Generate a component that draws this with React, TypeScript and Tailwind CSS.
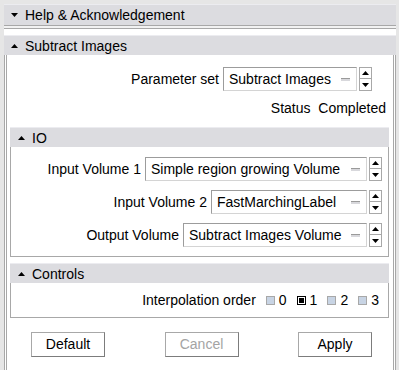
import React from 'react';

const font = { fontFamily: '"Liberation Sans", Arial, sans-serif' };

const Arrow = ({ up }: { up: boolean }) => (
  <svg width="7" height="4" viewBox="0 0 7 4" className="block">
    {up ? <path d="M3.5 0 L7 4 L0 4 Z" fill="#000" /> : <path d="M0 0 L7 0 L3.5 4 Z" fill="#000" />}
  </svg>
);

const Header = ({ title, open, h = 20, icon = 22 }: { title: string; open: boolean; h?: number; icon?: number }) => (
  <div className="flex items-center bg-[#dcdce0] border-t border-[#ececf0] text-[14px] text-black" style={{ height: h }}>
    <div className="flex justify-center" style={{ width: icon }}>
      <Arrow up={open} />
    </div>
    <span className="leading-none">{title}</span>
  </div>
);

const Spinner = () => (
  <div className="flex flex-col ml-[2px]">
    <div className="w-[13px] h-[12px] border border-[#a8a8a8] bg-white flex items-center justify-center">
      <Arrow up />
    </div>
    <div className="w-[13px] h-[12px] border border-t-0 border-[#a8a8a8] bg-white flex items-center justify-center">
      <Arrow up={false} />
    </div>
  </div>
);

const Combo = ({ text, width }: { text: string; width: number }) => (
  <div className="flex items-center">
    <div
      className="h-[24px] bg-white border border-[#9c9c9c] border-r-[#d4d4d4] border-b-[#d4d4d4] flex items-center justify-between pl-[5px] pr-[6px] text-[14px]"
      style={{ width }}
    >
      <span className="whitespace-nowrap">{text}</span>
      <span className="w-[9px] h-[3px] bg-[#d8d8dc] border-t border-[#9a9a9a]" />
    </div>
    <Spinner />
  </div>
);

const Row = ({ label, text, width }: { label: string; text: string; width: number }) => (
  <div className="flex items-center justify-end gap-[4px]">
    <span className="whitespace-nowrap">{label}</span>
    <Combo text={text} width={width} />
  </div>
);

const Radio = ({ label, checked }: { label: string; checked?: boolean }) => (
  <div className="flex items-center gap-[4px]">
    <span
      className={
        checked
          ? 'w-[9px] h-[9px] border border-black bg-white flex items-center justify-center'
          : 'w-[9px] h-[9px] border border-[#a8a8a8] bg-[#c8d4e4]'
      }
    >
      {checked && <span className="w-[5px] h-[5px] bg-black" />}
    </span>
    <span className="leading-none">{label}</span>
  </div>
);

const Button = ({ label, disabled }: { label: string; disabled?: boolean }) => (
  <div
    className={
      'w-[74px] h-[25px] bg-white border border-[#a8a8a8] border-r-[#7c7c7c] border-b-[#7c7c7c] flex items-center justify-center text-[14px] ' +
      (disabled ? 'text-[#a4a4a4]' : 'text-black')
    }
  >
    {label}
  </div>
);

export default function App() {
  return (
    <div className="w-[399px] h-[370px] bg-[#e6e6e6] pl-[4px] pt-[4px] overflow-hidden text-[14px] text-black" style={font}>
      <div className="w-[392px] h-[366px] bg-white">
        <Header title="Help & Acknowledgement" open={false} h={21} icon={21} />
        <div className="h-[4px] border-t border-b border-[#a8a8a8] bg-[#f2f2f2]" />
        <div className="h-[6px]" />
        <Header title="Subtract Images" open icon={21} />
        <div className="border-l-[3px] border-r-[3px] border-double border-[#a8a8a8] pl-[3px] pr-[4px] h-[320px]">
          <div className="flex justify-end pr-[17px] pt-[12px]">
            <Row label="Parameter set" text="Subtract Images" width={134} />
          </div>
          <div className="text-right pr-[3px] mt-[9px] leading-[16px]">Status&nbsp; Completed</div>
          <div className="mt-[11px]">
            <Header title="IO" open />
            <div className="border border-t-0 border-[#a8a8a8] pt-[10px] pb-[9px] pr-[6px] flex flex-col gap-[9px]">
              <Row label="Input Volume 1" text="Simple region growing Volume" width={222} />
              <Row label="Input Volume 2" text="FastMarchingLabel" width={156} />
              <Row label="Output Volume" text="Subtract Images Volume" width={184} />
            </div>
          </div>
          <div className="mt-[6px]">
            <Header title="Controls" open />
            <div className="border border-t-0 border-[#a8a8a8] h-[35px] flex items-center justify-end pr-[9px] gap-[10px]">
              <span className="leading-none">Interpolation order</span>
              <Radio label="0" />
              <Radio label="1" checked />
              <Radio label="2" />
              <Radio label="3" />
            </div>
          </div>
          <div className="flex justify-between pl-[21px] pr-[17px] mt-[14px]">
            <Button label="Default" />
            <Button label="Cancel" disabled />
            <Button label="Apply" />
          </div>
        </div>
      </div>
    </div>
  );
}
